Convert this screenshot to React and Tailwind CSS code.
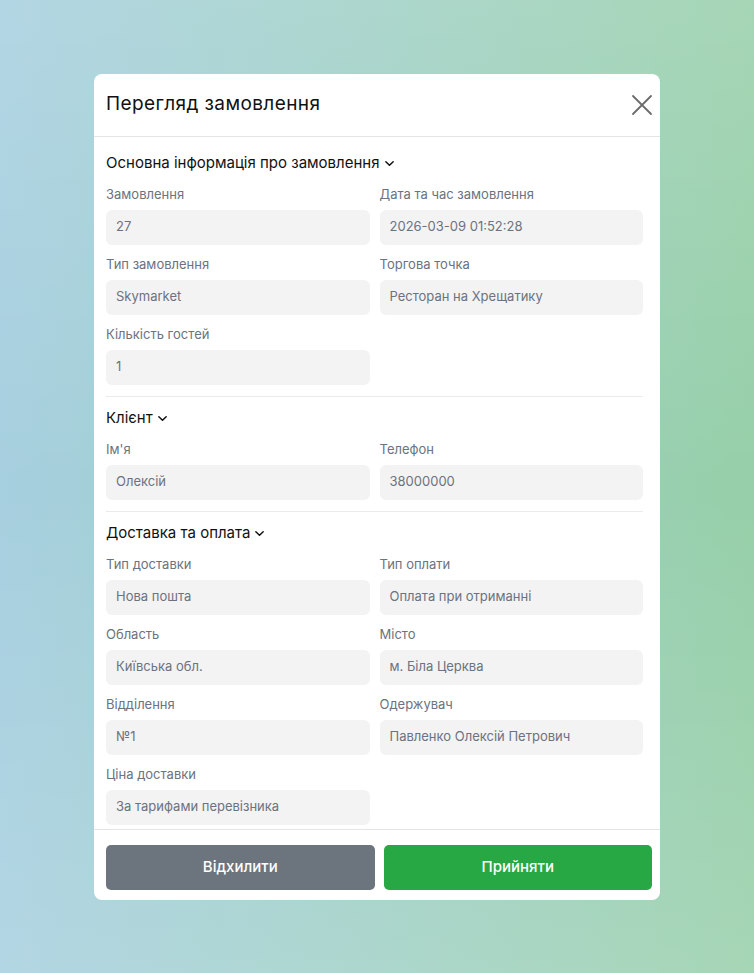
import React from "react";

const sections = [
  {
    title: "Основна інформація про замовлення",
    fields: [
      ["Замовлення", "27"],
      ["Дата та час замовлення", "2026-03-09 01:52:28"],
      ["Тип замовлення", "Skymarket"],
      ["Торгова точка", "Ресторан на Хрещатику"],
      ["Кількість гостей", "1"],
    ],
  },
  {
    title: "Клієнт",
    fields: [
      ["Ім'я", "Олексій"],
      ["Телефон", "38000000"],
    ],
  },
  {
    title: "Доставка та оплата",
    fields: [
      ["Тип доставки", "Нова пошта"],
      ["Тип оплати", "Оплата при отриманні"],
      ["Область", "Київська обл."],
      ["Місто", "м. Біла Церква"],
      ["Відділення", "№1"],
      ["Одержувач", "Павленко Олексій Петрович"],
      ["Ціна доставки", "За тарифами перевізника"],
    ],
  },
];

const Chevron = () => (
  <svg width="11" height="11" viewBox="0 0 12 12" fill="none" className="ml-[4px] mt-[1px]">
    <path d="M2 4l4 4 4-4" stroke="#111" strokeWidth="1.6" strokeLinecap="round" strokeLinejoin="round" />
  </svg>
);

const Field = ({ label, value }) => (
  <div className="flex flex-col">
    <label className="h-[18px] text-[13px] leading-[18px] text-[#6b7280]">{label}</label>
    <div className="mt-[7px] flex h-[35px] items-center rounded-[6px] bg-[#f3f3f3] px-[10px] text-[13px] text-[#6b7280]">
      {value}
    </div>
  </div>
);

export default function App() {
  return (
    <div
      className="relative flex h-[973px] w-full items-center justify-center bg-gradient-to-r from-[#a6cfdf] to-[#96cfa8]"
      style={{ fontFamily: 'Inter, "Noto Sans", sans-serif' }}
    >
      <div className="absolute inset-0 bg-gradient-to-b from-[#ffffff26] via-transparent to-[#ffffff26]" />
      <div className="relative flex h-[826px] w-[566px] flex-col overflow-hidden rounded-[8px] bg-white">
        {/* Header */}
        <div className="flex h-[63px] shrink-0 items-center justify-between border-b border-[#e5e5e5] pl-3 pr-[6px]">
          <h2 className="text-[19px] font-normal tracking-[0.4px] text-[#111]">Перегляд замовлення</h2>
          <button className="flex h-[24px] w-[24px] items-center justify-center">
            <svg width="22" height="22" viewBox="0 0 22 22" fill="none">
              <path d="M2 2l18 18M20 2L2 20" stroke="#6b6b6b" strokeWidth="1.8" strokeLinecap="round" />
            </svg>
          </button>
        </div>

        {/* Body */}
        <div className="flex-1 overflow-hidden pl-3 pr-[17px] pt-4">
          {sections.map((s, i) => (
            <div key={s.title} className={i > 0 ? "mt-[11px] border-t border-[#ebebeb] pt-[11px]" : ""}>
              <div className="flex h-[20px] items-center text-[15px] leading-[20px] text-[#111]">
                {s.title}
                <Chevron />
              </div>
              <div className="mt-[12px] grid grid-cols-2 gap-x-[10px] gap-y-[10px]">
                {s.fields.map(([l, v]) => (
                  <Field key={l} label={l} value={v} />
                ))}
              </div>
            </div>
          ))}
        </div>

        {/* Footer */}
        <div className="flex shrink-0 gap-[9px] border-t border-[#e5e5e5] pb-[10px] pl-3 pr-[8px] pt-[15px]">
          <button className="h-[45px] flex-1 rounded-[5px] bg-[#6c757d] text-[15px] font-medium text-white">
            Відхилити
          </button>
          <button className="h-[45px] flex-1 rounded-[5px] bg-[#28a745] text-[15px] font-medium text-white">
            Прийняти
          </button>
        </div>
      </div>
    </div>
  );
}
